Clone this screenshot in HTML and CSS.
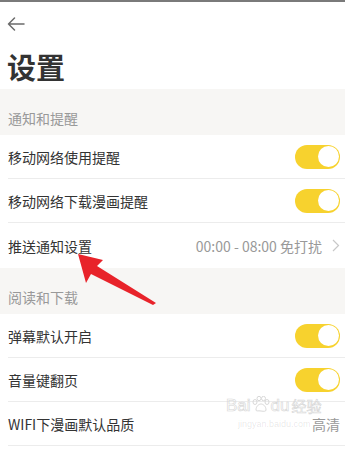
FILE: index.html
```html
<!DOCTYPE html>
<html lang="zh-CN">
<head>
<meta charset="utf-8">
<title>设置</title>
<link rel="stylesheet" href="styles.css">
</head>
<body>
<div class="page">
  <div class="nav">
    <svg class="back" width="18" height="14" viewBox="0 0 18 14"><path d="M17 7H1.5M7.5 1L1.5 7L7.5 13" fill="none" stroke="#6b6b6b" stroke-width="1.5" stroke-linecap="round" stroke-linejoin="round"/></svg>
  </div>
  <h1 class="title">设置</h1>

  <div class="section">通知和提醒</div>
  <div class="group">
    <div class="row"><span class="label">移动网络使用提醒</span><span class="toggle"><span class="knob"></span></span></div>
    <div class="row"><span class="label">移动网络下载漫画提醒</span><span class="toggle"><span class="knob"></span></span></div>
    <div class="row row-last"><span class="label">推送通知设置</span><span class="value">00:00 - 08:00 免打扰<svg class="chev" width="8" height="13" viewBox="0 0 8 13"><path d="M1 1L6.5 6.5L1 12" fill="none" stroke="#c8c8c8" stroke-width="1.2"/></svg></span></div>
  </div>

  <div class="section">阅读和下载</div>
  <div class="group">
    <div class="row"><span class="label">弹幕默认开启</span><span class="toggle"><span class="knob"></span></span></div>
    <div class="row"><span class="label">音量键翻页</span><span class="toggle"><span class="knob"></span></span></div>
    <div class="row"><span class="label">WIFI下漫画默认品质</span><span class="value">高清</span></div>
  </div>

  <div class="watermark">
    <div class="wm-line"><span>Bai</span><svg class="paw" width="20" height="16" viewBox="0 0 20 16"><g fill="none" stroke="#d8d8d8" stroke-width="1"><ellipse cx="4" cy="6" rx="2" ry="2.5"/><ellipse cx="8" cy="2.5" rx="2" ry="2.2"/><ellipse cx="12.5" cy="2.5" rx="2" ry="2.2"/><ellipse cx="16" cy="6" rx="2" ry="2.5"/><path d="M5 14c0-4 3-6 5-6s5 2 5 6c0 1.5-2 1.5-5 1s-5 .5-5-1z"/></g></svg><span>du</span><span class="wm-cn">经验</span></div>
    <div class="wm-url">jingyan.baidu.com</div>
  </div>

  <svg class="red-arrow" width="345" height="450" viewBox="0 0 345 450"><polygon points="78,254 103,260 97,266 156,303 153,305 91,274 86,283" fill="#e8232a"/></svg>
</div>
</body>
</html>
```

FILE: styles.css
```css
* { box-sizing: border-box; }
html, body { margin: 0; padding: 0; background: #fff; }
body {
  font-family: "Noto Sans CJK SC", "Noto Sans", sans-serif;
  color: #333;
}
.page {
  position: relative;
  width: 345px;
  height: 450px;
  overflow: hidden;
  border-top: 2px solid #7a7a7a;
  background: #fff;
}
.nav {
  height: 44px;
  display: flex;
  align-items: center;
  padding-left: 7px;
}
.back { display: block; }
.title {
  margin: 0;
  height: 43px;
  line-height: 40px;
  padding-left: 7px;
  font-size: 29px;
  font-weight: 700;
  color: #333;
}
.section {
  height: 46px;
  padding: 19px 8px 0;
  line-height: 20px;
  font-size: 14px;
  color: #999;
  background: #f7f6f4;
}
.group { background: #fff; }
.row {
  height: 44px;
  margin-left: 8px;
  padding-right: 5px;
  border-bottom: 1px solid #ececec;
  display: flex;
  align-items: center;
  justify-content: space-between;
  font-size: 14px;
}
.row-last { height: 45px; border-bottom: none; }
.label { color: #333; }
.value {
  color: #999;
  display: flex;
  align-items: center;
  gap: 10px;
}
.chev { display: block; }
.toggle {
  width: 45px;
  height: 24px;
  border-radius: 12px;
  background: #f7d22e;
  display: flex;
  align-items: center;
  justify-content: flex-end;
  padding-right: 1.5px;
}
.knob {
  width: 21px;
  height: 21px;
  border-radius: 50%;
  background: #fff;
}
.watermark {
  position: absolute;
  left: 226px;
  top: 394px;
  width: 100px;
  color: rgba(0, 0, 0, 0.1);
  pointer-events: none;
}
.wm-line {
  display: flex;
  align-items: flex-end;
  font-family: "Liberation Sans", sans-serif;
  font-size: 17px;
  line-height: 18px;
  color: transparent;
  -webkit-text-stroke: 0.6px #d6d6d6;
}
.paw { margin-bottom: 3px; }
.wm-cn { font-family: "Noto Sans CJK SC", sans-serif; font-size: 15px; margin-left: 2px; }
.wm-url {
  margin-top: 4px;
  margin-left: 12px;
  font-family: "Liberation Sans", sans-serif;
  font-size: 9px;
  color: rgba(0, 0, 0, 0.1);
}
.red-arrow {
  position: absolute;
  left: 0;
  top: -2px;
  pointer-events: none;
}
```
